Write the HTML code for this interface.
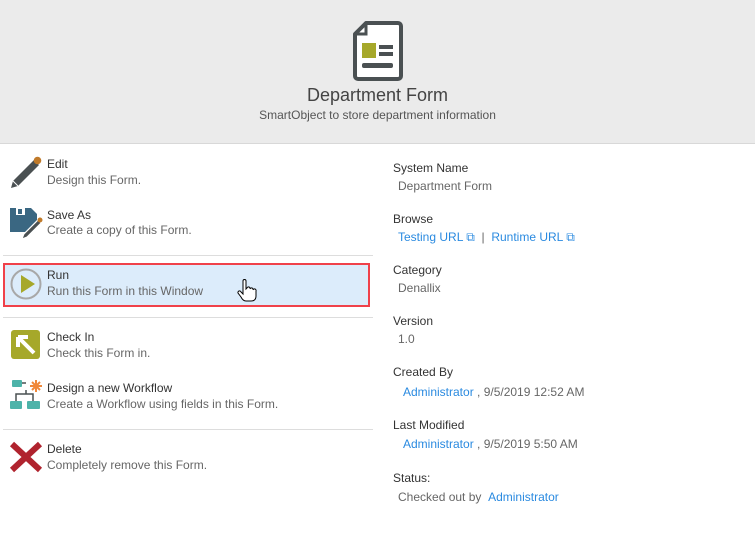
<!DOCTYPE html>
<html><head><style>
body{margin:0;width:755px;height:535px;background:#fff;position:relative;overflow:hidden;font-family:"Liberation Sans",sans-serif;font-size:12px;color:#333}
.a{position:absolute;white-space:nowrap}
.t{color:#333;font-size:12px}
.d{color:#666;font-size:12px}
.l{color:#2a8ae0}
.sep{position:absolute;left:3px;width:370px;height:1px;background:#ddd}
</style></head><body>
<div class="a" style="left:0;top:0;width:755px;height:143px;background:#ebebeb;border-bottom:1px solid #d8d8d8"></div>
<svg class="a" style="left:352px;top:20px" width="52" height="62" viewBox="0 0 52 62">
<path d="M14 3 H46 a3 3 0 0 1 3 3 V56 a3 3 0 0 1 -3 3 H6 a3 3 0 0 1 -3 -3 V14 Z" fill="#fff" stroke="#4a5052" stroke-width="4" stroke-linejoin="round"/>
<path d="M14 3 V14 H3" fill="none" stroke="#4a5052" stroke-width="3"/>
<rect x="10" y="23" width="14" height="15" fill="#a6a82a"/>
<rect x="27" y="25" width="14" height="4" fill="#4a5052"/>
<rect x="27" y="32" width="14" height="4" fill="#4a5052"/>
<rect x="10" y="43" width="31" height="5" rx="2" fill="#4a5052"/>
</svg>
<div class="a" style="left:0;width:755px;top:85px;text-align:center;font-size:18px;color:#444">Department Form</div>
<div class="a" style="left:0;width:755px;top:108px;text-align:center;font-size:12px;color:#555">SmartObject to store department information</div>

<svg class="a" style="left:9px;top:155px" width="34" height="34" viewBox="0 0 34 34"><path d="M25 5 L30 10 L9 31 L2 33 L4 26 Z" fill="#4a5052"/><path d="M4 26 L9 31" stroke="#fff" stroke-width="1"/><circle cx="28.5" cy="5.5" r="3.8" fill="#c07a2a"/></svg>
<div class="a t" style="left:47px;top:157px">Edit</div>
<div class="a d" style="left:47px;top:173px">Design this Form.</div>

<svg class="a" style="left:9px;top:206px" width="34" height="34" viewBox="0 0 34 34"><path d="M1 2 H22 L28 8 V14 L16 26 H1 Z" fill="#3a6782"/><rect x="7" y="2" width="9" height="7" fill="#fff"/><rect x="9" y="3" width="4" height="5" fill="#3a6782"/><path d="M29 14 L32 17 L18 31 L13 33 L15 28 Z" fill="#4a5052" stroke="#fff" stroke-width="1"/><circle cx="31" cy="14" r="2.5" fill="#c07a2a"/></svg>
<div class="a t" style="left:47px;top:208px">Save As</div>
<div class="a d" style="left:47px;top:223px">Create a copy of this Form.</div>

<div class="sep" style="top:255px"></div>
<div class="a" style="left:3px;top:263px;width:363px;height:40px;background:#dcecfb;border:2px solid #f0414a"></div>
<svg class="a" style="left:9px;top:267px" width="34" height="34" viewBox="0 0 34 34"><circle cx="17" cy="17" r="14.5" fill="none" stroke="#a8a8a8" stroke-width="2"/><path d="M12 8 L26 17 L12 26 Z" fill="#a6a82a"/></svg>
<div class="a t" style="left:47px;top:268px">Run</div>
<div class="a d" style="left:47px;top:284px">Run this Form in this Window</div>
<svg class="a" style="left:237px;top:279px" width="20" height="24" viewBox="0 0 20 24"><path d="M6 2 a1.5 1.5 0 0 1 3 0 V10 L10 9 a1.5 1.5 0 0 1 3 1 a1.5 1.5 0 0 1 3 1 a1.5 1.5 0 0 1 3 1 V17 Q19 22 14 22 H9 Q6 22 4 18 L1 14 a1.5 1.5 0 0 1 3 -1 L6 15 Z" fill="#fff" stroke="#000" stroke-width="1"/></svg>
<div class="sep" style="top:317px"></div>

<svg class="a" style="left:11px;top:330px" width="30" height="30" viewBox="0 0 30 30"><rect x="0" y="0" width="29" height="29" rx="3" fill="#a6a82a"/><path d="M8 8 L23 23 M7 7 H17 M7 7 V17" stroke="#fff" stroke-width="4" fill="none"/></svg>
<div class="a t" style="left:47px;top:330px">Check In</div>
<div class="a d" style="left:47px;top:346px">Check this Form in.</div>

<svg class="a" style="left:9px;top:380px" width="34" height="32" viewBox="0 0 34 32"><rect x="3" y="0" width="10" height="7" rx="1" fill="#4db3a9"/><rect x="1" y="21" width="12" height="8" rx="1" fill="#4db3a9"/><rect x="18" y="21" width="13" height="8" rx="1" fill="#4db3a9"/><path d="M13 3 H17 M17 10 V14 H7 V21 M17 14 H24 V21" stroke="#4a5052" stroke-width="1.5" fill="none"/><path d="M27 0 V12 M21 6 H33 M23 2 L31 10 M31 2 L23 10" stroke="#f0883a" stroke-width="2"/></svg>
<div class="a t" style="left:47px;top:381px">Design a new Workflow</div>
<div class="a d" style="left:47px;top:397px">Create a Workflow using fields in this Form.</div>

<div class="sep" style="top:429px"></div>
<svg class="a" style="left:9px;top:441px" width="34" height="32" viewBox="0 0 34 32"><path d="M3 3 L31 29 M31 3 L3 29" stroke="#b0232e" stroke-width="6"/></svg>
<div class="a t" style="left:47px;top:442px">Delete</div>
<div class="a d" style="left:47px;top:458px">Completely remove this Form.</div>

<div class="a t" style="left:393px;top:161px">System Name</div>
<div class="a d" style="left:398px;top:179px">Department Form</div>
<div class="a t" style="left:393px;top:212px">Browse</div>
<div class="a" style="left:398px;top:230px"><span class="l">Testing URL ⧉</span> <span style="color:#666">&nbsp;|&nbsp;</span> <span class="l">Runtime URL ⧉</span></div>
<div class="a t" style="left:393px;top:263px">Category</div>
<div class="a d" style="left:398px;top:281px">Denallix</div>
<div class="a t" style="left:393px;top:314px">Version</div>
<div class="a d" style="left:398px;top:332px">1.0</div>
<div class="a t" style="left:393px;top:365px">Created By</div>
<div class="a d" style="left:403px;top:385px"><span class="l">Administrator</span> , 9/5/2019 12:52 AM</div>
<div class="a t" style="left:393px;top:418px">Last Modified</div>
<div class="a d" style="left:403px;top:437px"><span class="l">Administrator</span> , 9/5/2019 5:50 AM</div>
<div class="a t" style="left:393px;top:471px">Status:</div>
<div class="a d" style="left:398px;top:490px">Checked out by &nbsp;<span class="l">Administrator</span></div>
</body></html>
